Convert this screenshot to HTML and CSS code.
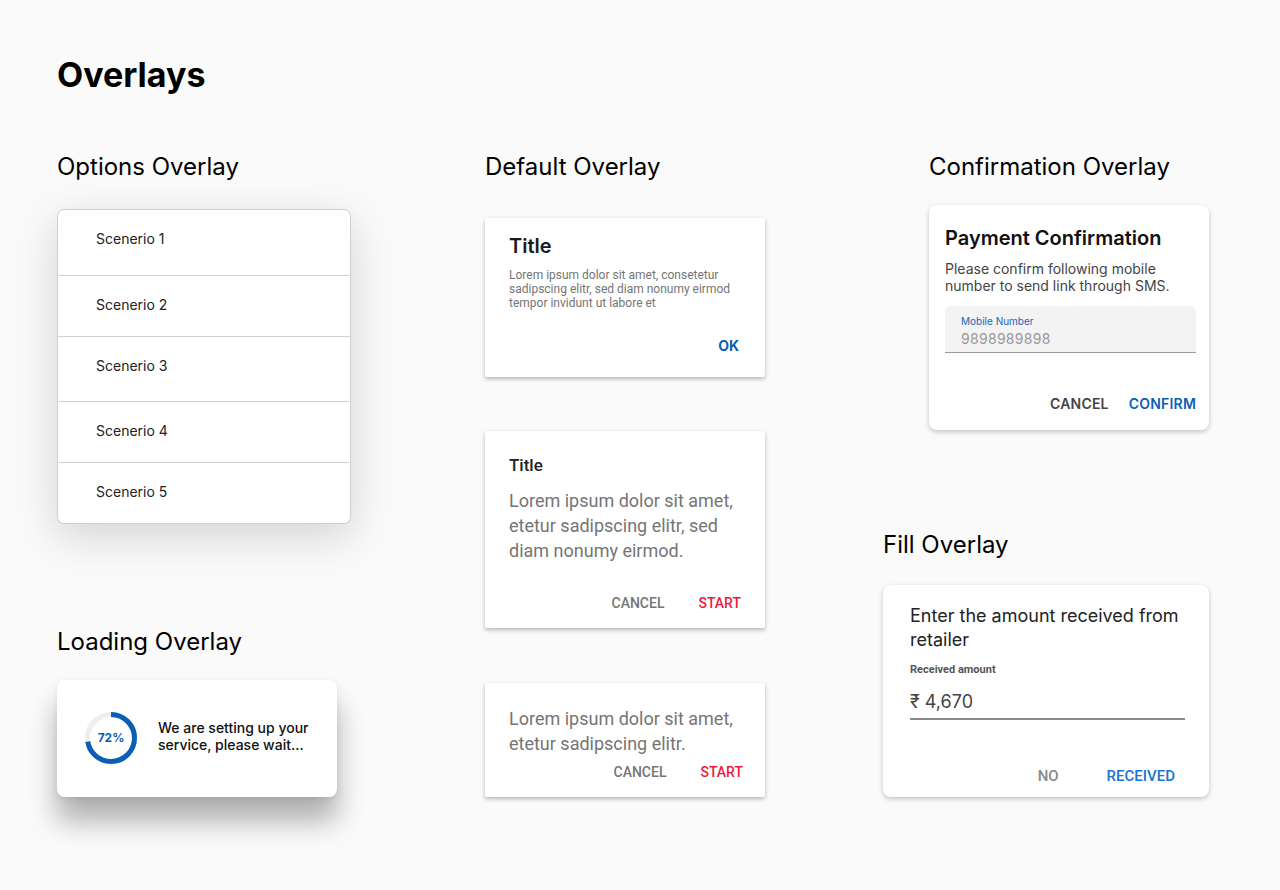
FILE: index.html
```html
<!DOCTYPE html>
<html lang="en">
<head>
<meta charset="UTF-8"/>
<meta name="viewport" content="width=device-width,initial-scale=1.0"/>
<title>Overlays</title>
<link rel="stylesheet" href="styles.css">
</head>
<body>
<main class="page">
  <h1>Overlays</h1>

  <div class="columns">
    <section class="col col-1">
      <h2>Options Overlay</h2>
      <ul class="options">
        <li class="tall">Scenerio 1</li>
        <li>Scenerio 2</li>
        <li class="tall">Scenerio 3</li>
        <li>Scenerio 4</li>
        <li>Scenerio 5</li>
      </ul>

      <h2 class="h-loading">Loading Overlay</h2>
      <div class="loading">
        <div class="ring">
          <svg width="54" height="54" viewBox="0 0 54 54">
            <circle cx="27" cy="27" r="23.5" fill="none" stroke="#eeeeee" stroke-width="5"/>
            <circle cx="27" cy="27" r="23.5" fill="none" stroke="#0a5fb4" stroke-width="5"
              stroke-dasharray="106.3 147.7" transform="rotate(-90 27 27)"/>
          </svg>
          <span>72%</span>
        </div>
        <p>We are setting up your service, please wait...</p>
      </div>
    </section>

    <section class="col col-2">
      <h2>Default Overlay</h2>
      <div class="dlg dlg-a">
        <h3>Title</h3>
        <p>Lorem ipsum dolor sit amet, consetetur sadipscing elitr, sed diam nonumy eirmod tempor invidunt ut labore et</p>
        <div class="actions"><button class="ok">OK</button></div>
      </div>

      <div class="dlg dlg-b">
        <h3>Title</h3>
        <p>Lorem ipsum dolor sit amet, etetur sadipscing elitr, sed diam nonumy eirmod.</p>
        <div class="actions"><button class="muted">CANCEL</button><button class="start">START</button></div>
      </div>

      <div class="dlg dlg-c">
        <p>Lorem ipsum dolor sit amet, etetur sadipscing elitr.</p>
        <div class="actions"><button class="muted">CANCEL</button><button class="start">START</button></div>
      </div>
    </section>

    <section class="col col-3">
      <div class="confirm-wrap">
        <h2>Confirmation Overlay</h2>
        <div class="confirm">
          <h3>Payment Confirmation</h3>
          <p>Please confirm following mobile number to send link through SMS.</p>
          <div class="field">
            <label>Mobile Number</label>
            <div class="value">9898989898</div>
          </div>
          <div class="actions"><button class="dark">CANCEL</button><button class="blue">CONFIRM</button></div>
        </div>
      </div>

      <h2 class="h-fill">Fill Overlay</h2>
      <div class="fill">
        <h3>Enter the amount received from retailer</h3>
        <label>Received amount</label>
        <div class="amount">₹ 4,670</div>
        <div class="actions"><button class="no">NO</button><button class="received">RECEIVED</button></div>
      </div>
    </section>
  </div>
</main>
</body>
</html>
```

FILE: styles.css
```css
* { box-sizing:border-box; }
html { background:#fafafa; }
body { margin:0; min-height:890px; background:#fafafa; font-family:Inter,"Noto Sans",sans-serif; color:#111; }
.page { padding:53px 0 80px 57px; }
h1 { margin:0; font-size:34px; line-height:44px; font-weight:700; color:#000; }
h2 { margin:0; font-size:24px; line-height:30px; font-weight:400; color:#000; }
h3, p { margin:0; }
button { border:0; background:none; padding:0; cursor:pointer; font-family:inherit; }

.columns { display:flex; margin-top:55px; }
.col-1 { width:428px; }
.col-2 { width:398px; }
.col-3 { width:326px; }

/* options */
.options { list-style:none; margin:27px 0 0; padding:0; width:294px; background:#fff; border:1px solid #cfcfcf; border-radius:7px; box-shadow:0 12px 44px rgba(0,0,0,.16); overflow:hidden; }
.options li { height:61px; padding:19px 38px 0; font-size:14px; line-height:20px; color:#222; border-top:1px solid #d0d0d0; }
.options li:first-child { border-top:0; height:65px; }
.options li.tall { height:65px; }

/* loading */
.h-loading { margin-top:103px; }
.loading { margin-top:23px; width:280px; height:117px; background:#fff; border-radius:8px; display:flex; align-items:center; padding:0 0 2px 27px; gap:20px; box-shadow:0 24px 28px rgba(0,0,0,.3), 0 2px 6px rgba(0,0,0,.08); }
.ring { position:relative; width:54px; height:54px; }
.ring svg { display:block; }
.ring span { position:absolute; inset:0; display:flex; align-items:center; justify-content:center; font-size:12px; font-weight:700; color:#0a5fb4; }
.loading p { font-size:14px; line-height:17px; font-weight:500; color:#111; width:160px; padding-bottom:4px; }

/* default dialogs */
.dlg { width:280px; background:#fff; box-shadow:0 2px 4px rgba(0,0,0,.28); border-radius:2px; font-family:Roboto,"Liberation Sans",sans-serif; }
.dlg .actions { display:flex; justify-content:flex-end; }
.dlg button { font-family:Roboto,sans-serif; font-size:14px; line-height:20px; font-weight:500; }
.dlg .muted { color:#757575; }
.dlg .start { color:#ee1a3d; margin-left:34px; }

.dlg-a { margin-top:36px; height:159px; padding:16px 26px 0 24px; }
.dlg-a h3 { font-family:Inter,sans-serif; font-size:20px; line-height:24px; font-weight:600; color:#1a1a1a; }
.dlg-a p { margin-top:10px; font-size:12px; line-height:14px; color:#757575; }
.dlg-a .actions { margin-top:26px; }
.dlg-a .ok { font-family:Inter,sans-serif; font-weight:700; color:#0a5fb4; }

.dlg-b { margin-top:54px; height:197px; padding:24px 24px 0; }
.dlg-b h3 { font-size:17px; line-height:20px; font-weight:500; color:#222; }
.dlg-b p { margin-top:13px; font-size:18px; line-height:25px; color:#757575; }
.dlg-b .actions { margin-top:30px; }

.dlg-c { margin-top:55px; height:114px; padding:23px 22px 0 24px; }
.dlg-c p { font-size:18px; line-height:25px; color:#757575; }
.dlg-c .actions { margin-top:6px; }

/* confirmation */
.confirm-wrap { margin-left:46px; }
.confirm { margin-top:23px; width:280px; height:225px; background:#fff; border-radius:8px; padding:21px 13px 0 16px; box-shadow:0 2px 5px rgba(0,0,0,.22); }
.confirm h3 { font-size:20px; line-height:24px; font-weight:600; color:#111; }
.confirm p { margin-top:10px; font-size:14px; line-height:17px; color:#444; }
.field { margin-top:12px; height:47px; background:#f3f3f3; border-radius:6px 6px 0 0; border-bottom:1px solid #9a9a9a; padding:9px 16px 0; }
.field label { display:block; font-size:10px; line-height:12px; color:#1a66b8; }
.field .value { margin-top:3px; font-size:14px; line-height:18px; color:#999; letter-spacing:.3px; }
.confirm .actions { margin-top:41px; display:flex; justify-content:flex-end; gap:20px; }
.confirm button { font-size:14px; line-height:20px; font-weight:600; letter-spacing:.2px; }
.confirm .dark { color:#444; }
.confirm .blue { color:#0a5fb4; }

/* fill */
.h-fill { margin-top:100px; }
.fill { margin-top:25px; width:326px; height:212px; background:#fff; border-radius:8px; padding:19px 24px 0 27px; box-shadow:0 2px 5px rgba(0,0,0,.22); }
.fill h3 { font-size:18px; line-height:24px; font-weight:400; color:#222; }
.fill label { display:block; margin-top:11px; font-family:Roboto,sans-serif; font-size:11px; line-height:14px; font-weight:700; color:#555; }
.fill .amount { margin-top:13px; font-size:18px; line-height:24px; color:#444; padding-bottom:4px; border-bottom:2px solid #8a8a8a; }
.fill .actions { margin-top:46px; display:flex; justify-content:flex-end; padding-right:10px; }
.fill button { font-family:Roboto,sans-serif; font-size:15px; line-height:20px; font-weight:500; }
.fill .no { color:#888; }
.fill .received { color:#1a73d0; margin-left:48px; }
```
